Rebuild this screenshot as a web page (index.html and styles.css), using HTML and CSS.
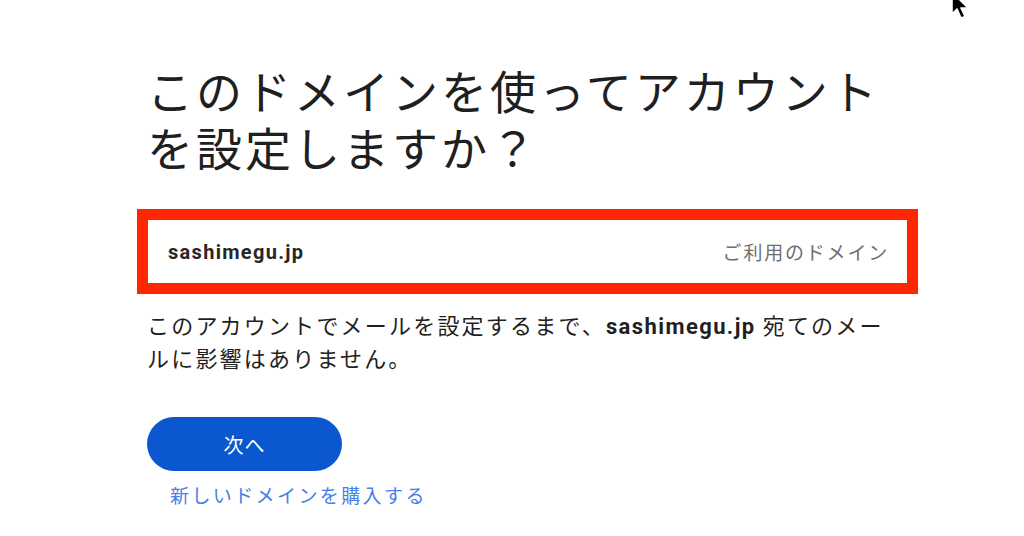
FILE: index.html
```html
<!DOCTYPE html>
<html lang="ja">
<head>
<meta charset="utf-8">
<link rel="stylesheet" href="styles.css">
</head>
<body>
<main class="page">
  <h1 class="title"><span class="title-line">このドメインを使ってアカウント</span><span class="title-line">を設定しますか？</span></h1>
  <div class="domain-box">
    <span class="domain-name">sashimegu.jp</span>
    <span class="domain-label">ご利用のドメイン</span>
  </div>
  <p class="note">このアカウントでメールを設定するまで、<b class="bold">sashimegu.jp</b> 宛てのメー<br>ルに影響はありません。</p>
  <div class="actions">
    <button class="next-btn">次へ</button>
    <a class="buy-link" href="#">新しいドメインを購入する</a>
  </div>
</main>
<svg class="cursor" width="26" height="24" viewBox="0 0 26 24"><path d="M2 -8 L2 14 L7 9 L11 18 L15 16.5 L11 8 L18 8 Z" fill="#000" stroke="#fff" stroke-width="1.6" stroke-linejoin="round"/></svg>
</body>
</html>
```
FILE: styles.css
```css
html, body {
  margin: 0;
  padding: 0;
  background: #fff;
}
body {
  font-family: "Noto Sans CJK JP", "Noto Sans", sans-serif;
  color: #202124;
  position: relative;
  height: 536px;
  overflow: hidden;
}
.page {
  padding: 61px 0 0 147px;
  width: 770px;
}
.title {
  margin: 0;
  font-size: 46px;
  font-weight: 400;
  line-height: 57px;
  letter-spacing: 3px;
  color: #1f1f1f;
}
.title-line {
  display: block;
  height: 57px;
}
.domain-box {
  margin-top: 45px;
  width: 759px;
  height: 63px;
  box-sizing: border-box;
  margin-left: 1px;
  outline: 11px solid #ff2600;
  display: flex;
  align-items: center;
  justify-content: space-between;
  padding: 0 18px 0 20px;
}
.domain-name {
  font-family: "Roboto", "Noto Sans", sans-serif;
  font-weight: 700;
  font-size: 20px;
  letter-spacing: 1.3px;
  color: #262626;
}
.domain-label {
  font-size: 19px;
  color: #6f6f6f;
  letter-spacing: 1.8px;
}
.note {
  margin: 26px 0 0 0;
  font-size: 22px;
  line-height: 31px;
  letter-spacing: 2.2px;
  color: #1f1f1f;
}
.bold {
  font-family: "Roboto", "Noto Sans", sans-serif;
  font-weight: 700;
  letter-spacing: 1.4px;
}
.actions {
  margin-top: 44px;
  display: flex;
  flex-direction: column;
  align-items: flex-start;
}
.next-btn {
  width: 195px;
  height: 54px;
  border: none;
  border-radius: 27px;
  background: #0b57d0;
  color: #fff;
  font-family: "Noto Sans CJK JP", sans-serif;
  font-size: 20px;
  letter-spacing: 1px;
}
.buy-link {
  margin: 10px 0 0 23px;
  font-size: 19px;
  letter-spacing: 2.4px;
  color: #4480ea;
  text-decoration: none;
}
.cursor {
  position: absolute;
  left: 950px;
  top: 0;
}
```
